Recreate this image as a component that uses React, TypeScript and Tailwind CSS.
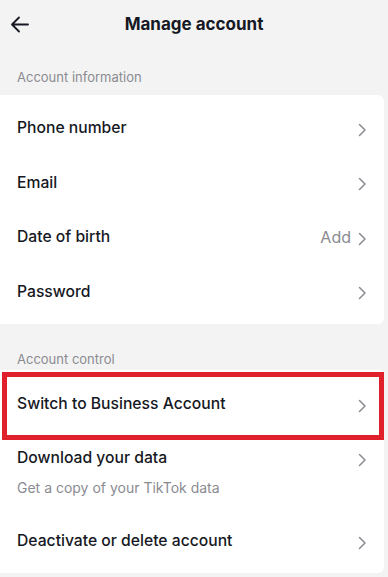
import React from 'react';

const Chevron = () => (
  <svg width="9" height="14" viewBox="0 0 9 14" fill="none" className="shrink-0 mt-[3px]">
    <polyline points="1.5,1.5 7,7 1.5,12.5" stroke="#8a8b91" strokeWidth="1.5" strokeLinecap="round" strokeLinejoin="round" />
  </svg>
);

const Row: React.FC<{ label: string; value?: string; tall?: boolean }> = ({ label, value, tall }) => (
  <div className={(tall ? 'h-[54.5px]' : 'h-[54px]') + ' pl-[17px] pr-[17px] flex items-center justify-between'}>
    <span className="text-[15.7px] font-medium text-[#161823]">{label}</span>
    <div className="flex items-center gap-[7px]">
      {value && <span className="text-[16px] text-[#8a8b91]">{value}</span>}
      <Chevron />
    </div>
  </div>
);

export default function App() {
  return (
    <div className="w-[388px] h-[577px] overflow-hidden bg-[#f3f3f3]" style={{ fontFamily: 'Inter, "Liberation Sans", sans-serif' }}>
      <div className="h-12 relative flex items-center justify-center">
        <button className="absolute left-[10px] top-[16px]">
          <svg width="19" height="17" viewBox="0 0 19 17" fill="none">
            <path d="M18 8.5H2M9 1.5L2 8.5L9 15.5" stroke="#161823" strokeWidth="1.8" strokeLinecap="round" strokeLinejoin="round" />
          </svg>
        </button>
        <h1 className="text-[17px] font-bold text-[#161823] mt-[1px]">Manage account</h1>
      </div>

      <p className="pl-[17px] pt-[21px] pb-[10px] text-[13px] leading-4 text-[#8a8b91]">Account information</p>
      <div className="bg-white mr-[4px] rounded-r-[6px] pt-[6px] pb-[5px]">
        <Row label="Phone number" tall />
        <Row label="Email" tall />
        <Row label="Date of birth" value="Add" tall />
        <Row label="Password" tall />
      </div>

      <p className="pl-[17px] pt-[27px] pb-[3px] text-[13px] leading-4 text-[#8a8b91]">Account control</p>
      <div className="relative bg-white mr-[4px] rounded-r-[6px] pt-[7px] pb-[5px]">
        <Row label="Switch to Business Account" />
        <div className="pl-[17px] pr-[17px] pt-[17px] pb-[17px]">
          <div className="flex items-center justify-between h-5">
            <span className="text-[15.7px] font-medium text-[#161823]">Download your data</span>
            <Chevron />
          </div>
          <p className="mt-[11px] text-[14px] leading-[18px] text-[#8a8b91]">Get a copy of your TikTok data</p>
        </div>
        <Row label="Deactivate or delete account" />
        <div className="absolute left-[2px] top-[2px] w-[382px] h-[68px] border-[5px] border-[#e0202b]" />
      </div>
    </div>
  );
}
